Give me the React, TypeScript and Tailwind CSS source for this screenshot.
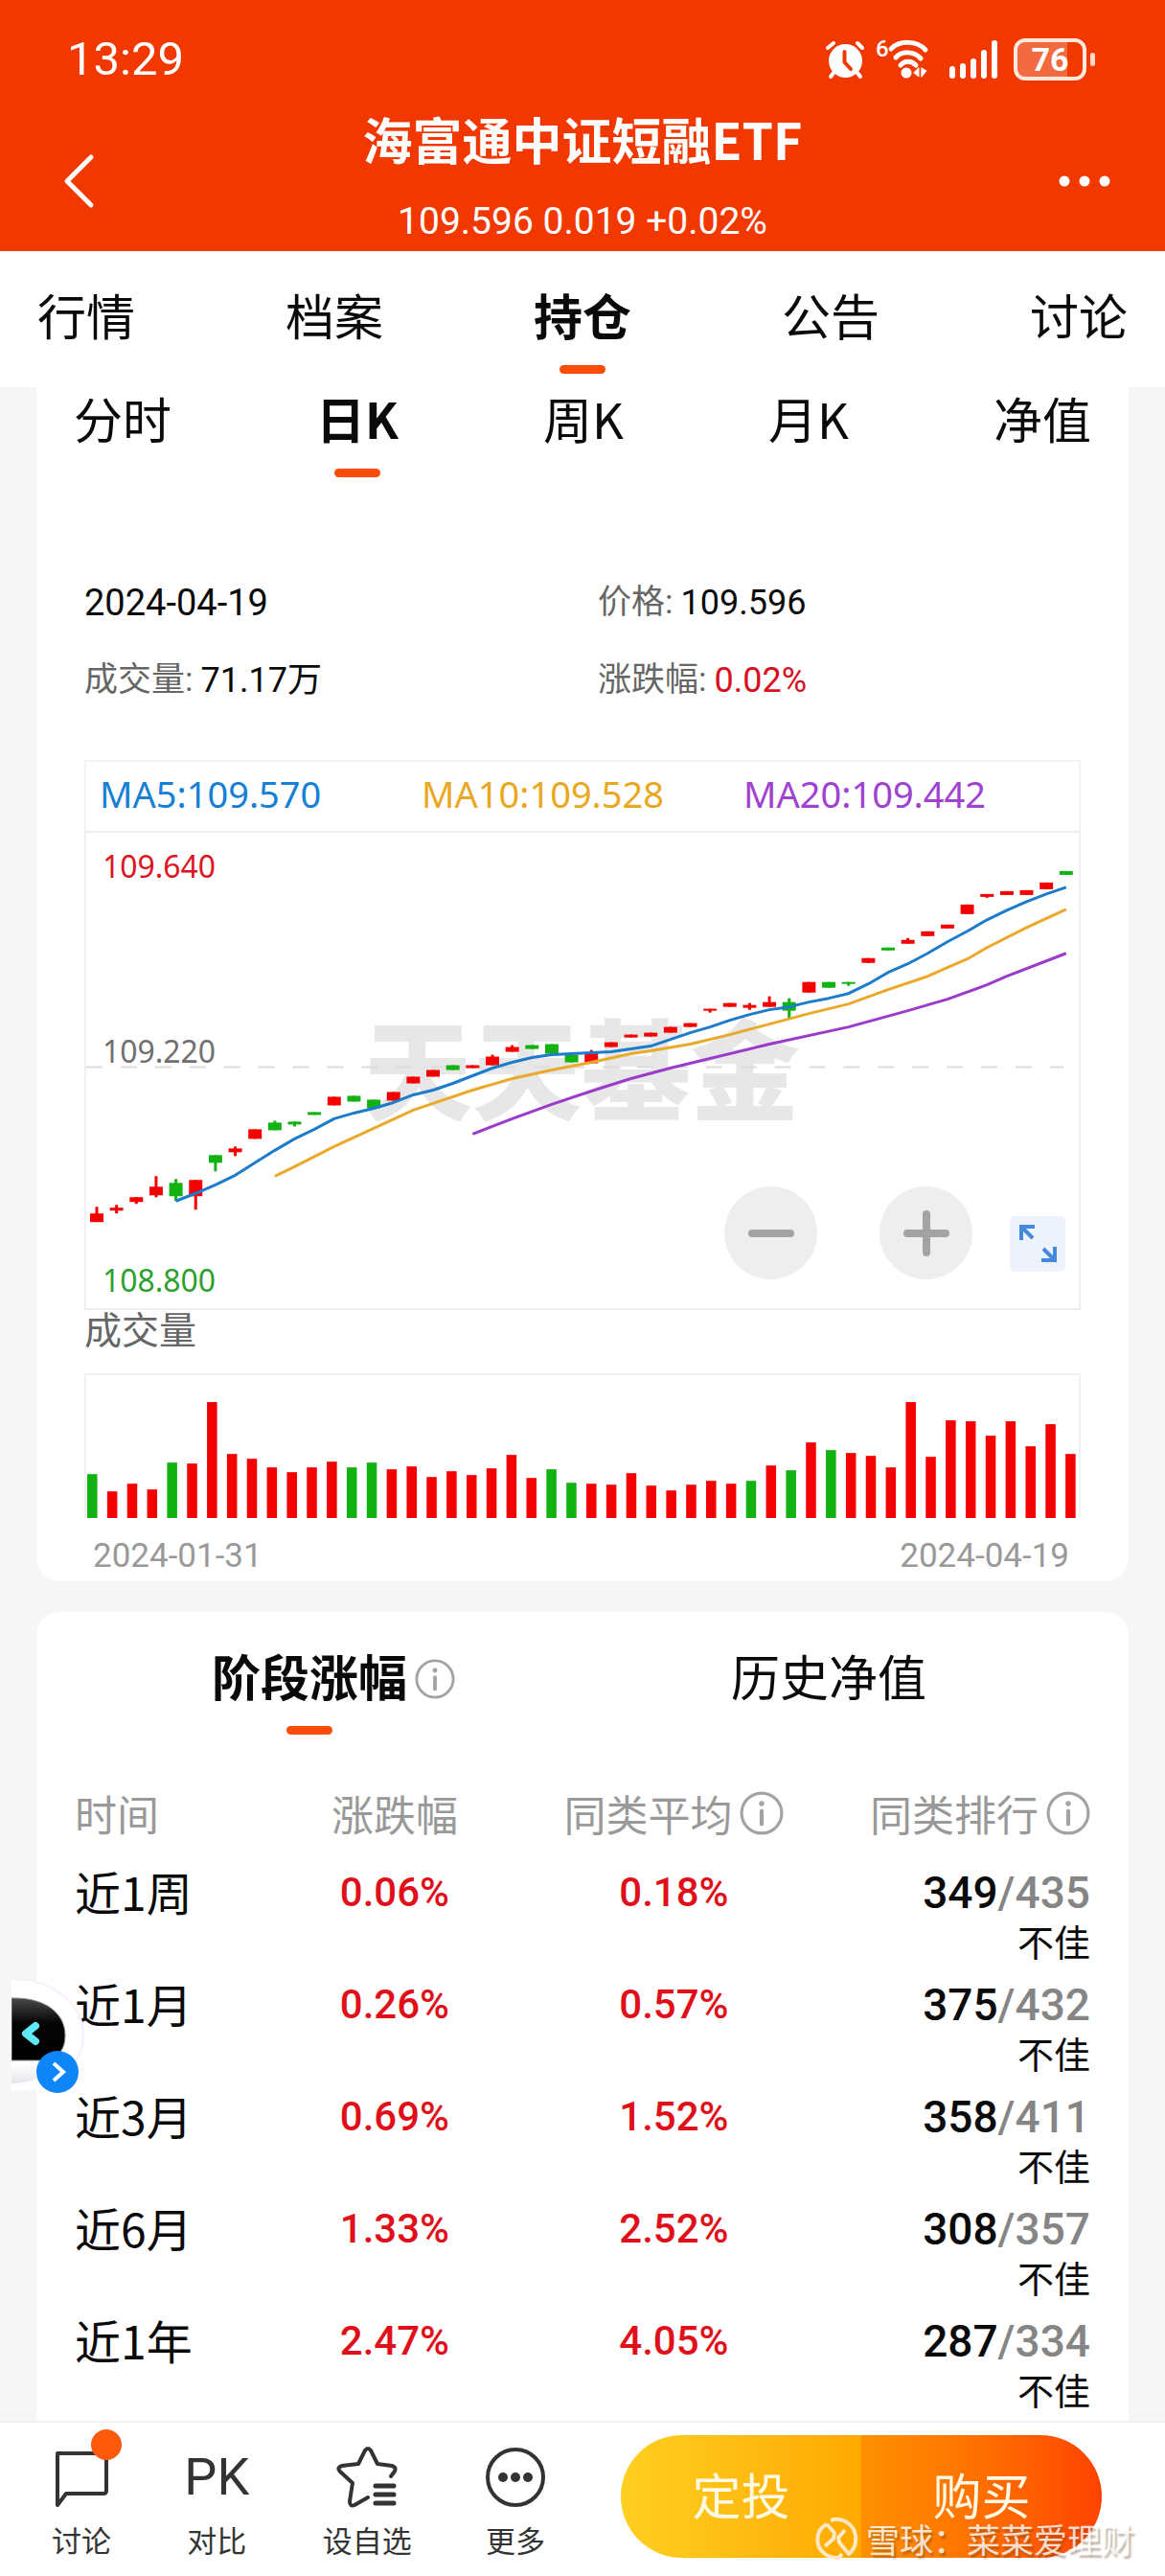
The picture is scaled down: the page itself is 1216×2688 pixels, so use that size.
import React from "react";

const RED = "#f40000";
const GREEN = "#12b212";

/* [up, bodyTop, bodyBottom, wickTop, wickBottom] */
const candles: [number, number, number, number, number][] = [
  [1, 398, 407, 391, 407], [1, 392, 395, 389, 398], [1, 381, 386, 381, 388], [1, 370, 379, 359, 381],
  [0, 366, 380, 362, 385], [1, 363, 380, 363, 394], [0, 337, 345, 337, 354], [1, 330, 334, 328, 338],
  [1, 310, 320, 310, 320], [0, 303, 311, 301, 311], [0, 302, 305, 302, 307], [0, 292, 295, 292, 295],
  [1, 276, 285, 276, 285], [0, 275, 281, 275, 281], [0, 279, 288, 279, 288], [1, 271, 280, 271, 280],
  [1, 255, 262, 255, 262], [1, 248, 255, 248, 255], [0, 243, 248, 243, 248], [1, 243, 246, 243, 246],
  [1, 234, 243, 232, 243], [1, 224, 229, 222, 229], [0, 222, 226, 222, 226], [0, 221, 231, 221, 231],
  [0, 232, 240, 232, 240], [1, 230, 241, 227, 241], [1, 219, 224, 219, 224], [1, 211, 214, 211, 214],
  [1, 209, 213, 209, 213], [1, 203, 209, 203, 209], [1, 199, 203, 199, 203], [1, 184, 186, 184, 188],
  [1, 178, 182, 178, 182], [1, 180, 183, 178, 185], [1, 177, 182, 171, 182], [0, 177, 186, 173, 194],
  [1, 156, 167, 156, 167], [0, 156, 162, 156, 162], [0, 156, 158, 156, 160], [1, 131, 136, 131, 136],
  [0, 120, 123, 120, 123], [1, 112, 116, 110, 116], [1, 103, 108, 103, 108], [1, 96, 100, 96, 100],
  [1, 75, 85, 75, 85], [1, 64, 67, 64, 68], [1, 61, 65, 61, 65], [1, 60, 65, 60, 65],
  [1, 52, 59, 52, 59], [0, 40, 44, 40, 44],
];

const candleX = (i: number) => 11 + i * 20.69;

const ma5 = [385, 377, 368, 358, 345, 332, 320, 310, 299, 293, 288, 282, 274, 269, 262, 254, 246, 240, 235, 232, 231, 230, 229, 226, 223, 216, 209, 203, 196, 190, 185, 182, 177, 173, 168, 158, 146, 137, 126, 114, 103, 91, 81, 72, 64, 57]
  .map((y, i) => `${candleX(i + 4)},${y}`).join(" ");

const toPoints = (pts: number[][]) => pts.map(([i, y]) => `${candleX(i)},${y}`).join(" ");
const ma10 = toPoints([[9, 359], [10, 349], [12, 328], [14, 309], [16, 290], [17, 283], [19, 269], [21, 257], [23, 248], [25, 240], [27, 231], [28, 228], [30, 221], [32, 211], [34, 200], [36, 189], [38, 179], [40, 164], [42, 150], [43, 141], [44, 132], [45, 120], [47, 99], [49, 80]]);
const ma20 = toPoints([[19, 315], [21, 299], [23, 284], [25, 270], [27, 257], [29, 246], [31, 236], [34, 221], [38, 203], [41, 186], [43, 174], [45, 159], [46, 150], [49, 126]]);

const volumes = [46, 28, 36, 30, 58, 57, 121, 67, 62, 53, 48, 53, 59, 53, 58, 51, 54, 43, 49, 45, 52, 66, 42, 51, 37, 36, 35, 47, 34, 29, 35, 39, 36, 39, 55, 50, 79, 71, 68, 65, 53, 121, 64, 102, 101, 86, 101, 75, 98, 67];
const greenVolumes = [0, 4, 13, 14, 23, 24, 33, 35, 37];

const rows = [
  ["近1周", "0.06%", "0.18%", "349", "435"],
  ["近1月", "0.26%", "0.57%", "375", "432"],
  ["近3月", "0.69%", "1.52%", "358", "411"],
  ["近6月", "1.33%", "2.52%", "308", "357"],
  ["近1年", "2.47%", "4.05%", "287", "334"],
];

const num = "font-['Roboto','Noto_Sans_CJK_SC',sans-serif]";

function StatusIcons() {
  return (
    <div className="flex items-center" aria-label="状态">
      <svg width="40" height="42" viewBox="0 0 40 42" fill="none" strokeLinecap="round">
        <circle cx="20.500" cy="22.500" r="17.500" fill="#fff" />
        <path d="M2 9 L8 4 M33 4 L38 9" stroke="#fff" strokeWidth="4" />
        <path d="M8 35 L5 39 M33 35 L36 39" stroke="#fff" strokeWidth="4" />
        <path d="M19.500 13 V24 L26 31" stroke="#ef3900" strokeWidth="4" strokeLinejoin="round" />
      </svg>
      <div className="ml-3 flex">
        <span className={num + " w-3 text-2xl leading-5 font-medium"}>6</span>
        <svg width="44" height="42" viewBox="0 0 44 42" fill="none" stroke="#fff" strokeWidth="5" strokeLinecap="round">
          <path d="M4 10 C13 1 31 1 40 11" />
          <path d="M9 19 C15 12 28 12 35 20" />
          <path d="M14 27 C18 22 25 22 30 27" />
          <circle cx="20" cy="35" r="5.500" fill="#fff" stroke="none" />
          <path d="M33 30 V39 L28 35 Z M36 30 L41 33 L36 39 Z" fill="#fff" strokeWidth="1" />
        </svg>
      </div>
      <svg className="ml-5" width="52" height="42" viewBox="0 0 52 42" stroke="#fff" strokeWidth="6" strokeLinecap="round">
        <path d="M4 31 V38 M15 28 V38 M26 23 V38 M37 14 V38 M48 4 V38" />
      </svg>
      <div className="ml-4 flex items-center gap-1">
        <div className={num + " flex h-11 w-[76px] items-center justify-center rounded-xl border-4 border-[#ffe9dd] bg-linear-to-r from-[#f26a3f] from-76% to-[#ef3900] to-76% text-[34px] leading-9 font-bold"}>
          76
        </div>
        <div className="h-3.5 w-[5px] rounded-full bg-[#ffd9c8]" />
      </div>
    </div>
  );
}

function InfoIcon({ size }: { size: number }) {
  return (
    <svg width={size} height={size} viewBox="0 0 44 44" fill="none" stroke="#a3a3a3" strokeLinecap="round">
      <circle cx="22" cy="22" r="20" strokeWidth="3" />
      <path d="M22 20 V33" strokeWidth="4" />
      <circle cx="22" cy="12.500" r="2.600" fill="#a3a3a3" stroke="none" />
    </svg>
  );
}

function Tabs({ items, active }: { items: string[]; active: number }) {
  return (
    <nav className="flex justify-between px-[39px]">
      {items.map((label, i) => (
        <button key={label} className={"flex flex-col items-center text-[51px] leading-[54px] text-[#0a0a0a] " + (i === active ? "font-bold" : "")}>
          {label}
          {i === active && <span className="mt-[26px] h-[9px] w-12 rounded-full bg-[#fb4d06]" />}
        </button>
      ))}
    </nav>
  );
}

function PriceChart() {
  return (
    <div className="relative border-2 border-[#efefef]">
      <svg className="block h-auto w-full" viewBox="0 0 1038 497" role="img" aria-label="日K线">
        <text x="290" y="292" fontSize="114" fontWeight="900" fill="#e7e7e7" fontFamily="Noto Sans CJK SC, sans-serif">天天基金</text>
        <path d="M0 245 H1022" stroke="#dcdcdc" strokeWidth="2" strokeDasharray="17 19" />
        <g fontSize="32" fontFamily="Noto Sans, sans-serif">
          <text x="17" y="47" fill="#dc1423">109.640</text>
          <text x="17" y="240" fill="#707070">109.220</text>
          <text x="17" y="480" fill="#2ca02f">108.800</text>
        </g>
        {candles.map(([up, top, bottom, high, low], i) => (
          <g key={i} fill={up ? RED : GREEN}>
            <rect x={candleX(i) - 7} y={top} width="14" height={bottom - top} />
            <rect x={candleX(i) - 1.5} y={high} width="3" height={low - high} />
          </g>
        ))}
        <g fill="none" strokeWidth="3" strokeLinejoin="round">
          <polyline points={ma20} stroke="#9a3bcb" />
          <polyline points={ma10} stroke="#eaa92a" />
          <polyline points={ma5} stroke="#1c7ccb" />
        </g>
      </svg>
      <div className="absolute right-3.5 bottom-[30px] flex items-end">
        <button aria-label="缩小" className="mr-[65px] flex size-[97px] items-center justify-center rounded-full bg-[#eee]">
          <svg width="52" height="52" viewBox="0 0 52 52" stroke="#a3a3a3" strokeWidth="8" strokeLinecap="round"><path d="M6 26 H46" /></svg>
        </button>
        <button aria-label="放大" className="mr-[39px] flex size-[97px] items-center justify-center rounded-full bg-[#eee]">
          <svg width="52" height="52" viewBox="0 0 52 52" stroke="#a3a3a3" strokeWidth="8" strokeLinecap="round"><path d="M6 26 H46 M26 6 V46" /></svg>
        </button>
        <button aria-label="全屏" className="mb-2 rounded-md bg-[#eef2fd]">
          <svg width="58" height="58" viewBox="0 0 58 58" fill="none" stroke="#4489dc" strokeWidth="4">
            <path d="M26 11 H12 V25 M12 11 L24 23" />
            <path d="M33 46 H47 V32 M47 46 L35 34" />
          </svg>
        </button>
      </div>
    </div>
  );
}

function VolumeChart() {
  return (
    <svg className="block h-auto w-full" viewBox="0 0 1038 151" role="img" aria-label="成交量">
      <path d="M1 151 V1 H1037 V151" fill="none" stroke="#f1f1f1" strokeWidth="2" />
      {volumes.map((v, i) => (
        <rect key={i} x={3 + i * 20.8} y={151 - v} width="10.500" height={v} fill={greenVolumes.includes(i) ? GREEN : RED} />
      ))}
    </svg>
  );
}

function Assistant() {
  return (
    <button aria-label="助手" className="absolute top-[380px] -left-[26px]">
      <svg width="80" height="140" viewBox="0 0 80 140" fill="none">
        <defs>
          <linearGradient id="visor" x1="0" y1="0" x2="0" y2="1">
            <stop offset="0" stopColor="#4a4a4a" />
            <stop offset="0.400" stopColor="#050505" />
            <stop offset="1" stopColor="#000" />
          </linearGradient>
          <linearGradient id="base" x1="0" y1="0" x2="0" y2="1">
            <stop offset="0" stopColor="#fff" />
            <stop offset="1" stopColor="#e4e4ea" />
          </linearGradient>
        </defs>
        <path d="M0 3 C42 3 75 28 75 62 C75 94 45 120 0 120 Z" fill="#fff" />
        <path d="M0 3 C42 3 75 28 75 62 C75 76 70 87 62 96" stroke="#f8effa" strokeWidth="2" />
        <path d="M0 92 H40 C34 106 18 112 0 112 Z" fill="url(#base)" />
        <path d="M0 23 C34 22 56 38 56 62 C56 76 50 84 36 88 H0 Z" fill="url(#visor)" stroke="#8d8d8d" strokeWidth="1" />
        <path d="M25 52 L15 60 L25 68" stroke="#5fe8f5" strokeWidth="8" strokeLinecap="round" strokeLinejoin="round" />
        <circle cx="48" cy="100" r="22" fill="#0f86f8" />
        <path d="M44 91 L54 100 L44 109" stroke="#fff" strokeWidth="4" />
      </svg>
    </button>
  );
}

function BarItem({ label, children }: { label: string; children: React.ReactNode }) {
  return (
    <button className="flex flex-col items-center text-[31px] leading-10 text-[#333]">
      <span className="flex h-[66px] items-center">{children}</span>
      <span className="mt-3">{label}</span>
    </button>
  );
}

function BottomBar() {
  const line = { fill: "none", stroke: "#333", strokeWidth: 4, strokeLinecap: "round" as const, strokeLinejoin: "round" as const };
  return (
    <footer className="relative flex h-[162px] shrink-0 items-start justify-between border-t-2 border-[#f1f1f1] bg-white pr-[66px] pl-[54px]">
      <div className="flex flex-1 justify-between pt-6 pr-[78px]">
        <BarItem label="讨论">
          <span className="relative">
            <svg width="60" height="62" viewBox="0 0 60 62" {...line}>
              <path d="M5 6 H54 Q56 6 56 8 V45 Q56 48 53 48 H14 L5 60 V8 Q5 6 7 6 Z" />
            </svg>
            <i className="absolute -top-[19px] -right-3 size-8 rounded-full bg-[#ff5a0c]" />
          </span>
        </BarItem>
        <BarItem label="对比">
          <span className={num + " text-[54px]"}>PK</span>
        </BarItem>
        <BarItem label="设自选">
          <svg width="64" height="64" viewBox="0 0 64 64" {...line}>
            <path d="M33 53 L19 61 Q14 63 14 57 L17 38 L4 26 Q0 22 6 20 L23 18 L30 4 Q33 0 36 4 L43 18 L58 20 Q64 22 60 27 L57 31" />
            <path d="M41 41 H60 M41 50 H60 M41 59 H60" strokeWidth="5" />
          </svg>
        </BarItem>
        <BarItem label="更多">
          <svg width="64" height="64" viewBox="0 0 64 64" {...line}>
            <circle cx="32" cy="32" r="29" />
            <g fill="#333" stroke="none"><circle cx="19" cy="32" r="5" /><circle cx="32" cy="32" r="5" /><circle cx="45" cy="32" r="5" /></g>
          </svg>
        </BarItem>
      </div>
      <div className="mt-[13px] flex h-32 overflow-hidden rounded-full text-[51px] text-[#fffae6]">
        <button className="w-[251px] bg-linear-to-r from-[#ffcf20] to-[#ffa900] pb-1.5">定投</button>
        <button className="w-[251px] bg-linear-to-r from-[#ff9100] to-[#ff4200] pb-1.5">购买</button>
      </div>
      <div className="absolute right-8 bottom-4 flex items-center gap-2 text-[35px] leading-[46px] text-white/80 [text-shadow:2px_3px_2px_rgba(90,60,30,0.4)]">
        <svg width="46" height="46" viewBox="0 0 46 46" fill="none" stroke="#ffe9c4" strokeWidth="4">
          <path d="M13 8 C1 14 0 31 11 39 C15 42 20 43 25 43 L29 39" />
          <path d="M17 4 C28 0 41 7 43 20 C44 28 41 35 36 39 L26 27 L25 22 L32 14" strokeLinejoin="round" />
          <path d="M13 8 L21 17 L20 23 L11 31" strokeLinejoin="round" />
        </svg>
        <span>雪球：菜菜爱理财</span>
      </div>
    </footer>
  );
}

export default function App() {
  return (
    <div className="flex min-h-screen flex-col bg-[#f6f6f6] font-['Noto_Sans_CJK_SC',sans-serif] text-[#0a0a0a]">
      <header className="bg-[#f03800] pb-[7px] text-white">
        <div className="flex h-[115px] items-center justify-between pt-2 pr-[73px] pl-[70px]">
          <time className={num + " text-[49px] leading-none"}>13:29</time>
          <StatusIcons />
        </div>
        <div className="flex items-center justify-between px-14">
          <button aria-label="返回" className="mt-2 w-14">
            <svg width="56" height="60" viewBox="0 0 56 60" fill="none" stroke="#fff" strokeWidth="5" strokeLinecap="round" strokeLinejoin="round"><path d="M39 5 L14 30 L39 55" /></svg>
          </button>
          <div className="flex flex-col items-center gap-8">
            <h1 className="text-[52px] leading-[60px] font-bold">海富通中证短融ETF</h1>
            <p className={num + " text-[39px] leading-[48px]"}>109.596 0.019 +0.02%</p>
          </div>
          <button aria-label="更多" className="mt-2 w-14">
            <svg width="56" height="20" viewBox="0 0 56 20" fill="#fff"><circle cx="7" cy="10" r="5.500" /><circle cx="28" cy="10" r="5.500" /><circle cx="49" cy="10" r="5.500" /></svg>
          </button>
        </div>
      </header>

      <div className="h-[142px] bg-white pt-[39px]">
        <Tabs items={["行情", "档案", "持仓", "公告", "讨论"]} active={2} />
      </div>

      <section className="mx-[38px] rounded-b-3xl bg-white pt-[5px] pb-1.5">
        <Tabs items={["分时", "日K", "周K", "月K", "净值"]} active={1} />
        <div className="px-[50px]">
          <dl className={num + " mt-[107px] grid grid-cols-[535fr_503fr] gap-y-[33px] text-[36px] leading-[48px]"}>
            <div className="text-[38px]">2024-04-19</div>
            <div className="flex gap-2"><dt className="text-[35px] text-[#666]">价格:</dt><dd>109.596</dd></div>
            <div className="flex gap-2"><dt className="text-[35px] text-[#666]">成交量:</dt><dd>71.17万</dd></div>
            <div className="flex gap-2"><dt className="text-[35px] text-[#666]">涨跌幅:</dt><dd className="text-[#d8101c]">0.02%</dd></div>
          </dl>
          <div className="mt-[59px] grid h-[74px] grid-cols-3 items-center border-2 border-b-0 border-[#f3f3f3] px-3.5 pb-1.5 font-['Noto_Sans',sans-serif] text-[38px]">
            <span className="text-[#1580d4]">MA5:109.570</span>
            <span className="text-[#eaa722]">MA10:109.528</span>
            <span className="text-[#9f42cf]">MA20:109.442</span>
          </div>
          <PriceChart />
          <h2 className="mb-[30px] text-[39px] leading-[36px] text-[#666]">成交量</h2>
          <VolumeChart />
          <div className={num + " mt-5 flex justify-between pr-3 pl-[9px] text-[35px] leading-10 text-[#999]"}>
            <time>2024-01-31</time>
            <time>2024-04-19</time>
          </div>
        </div>
      </section>

      <section className="relative mx-[38px] mt-8 flex-1 rounded-t-3xl bg-white">
        <div className="flex justify-between pt-[39px] pr-[211px] pl-[183px]">
          <div className="flex gap-2">
            <button className="flex flex-col items-center text-[51px] leading-[54px] font-bold">
              阶段涨幅
              <span className="mt-[26px] h-[9px] w-12 rounded-full bg-[#fb4d06]" />
            </button>
            <span className="pt-2.5"><InfoIcon size={42} /></span>
          </div>
          <button className="flex text-[51px] leading-[54px]">历史净值</button>
        </div>
        <div className="px-[40px] pt-[54px]">
          <table className="w-full table-fixed">
            <thead>
              <tr className="h-[85px] align-top text-[44px] leading-[56px] text-[#999]">
                <th className="w-[21%] text-left font-normal">时间</th>
                <th className="w-[21%] font-normal">涨跌幅</th>
                <th className="font-normal"><span className="flex items-center justify-center gap-2">同类平均<InfoIcon size={46} /></span></th>
                <th className="w-[24%] font-normal"><span className="flex items-center justify-end gap-2">同类排行<InfoIcon size={46} /></span></th>
              </tr>
            </thead>
            <tbody>
              {rows.map(([period, change, average, rank, total]) => (
                <tr key={period} className="h-[117px] align-top leading-[52px] last:h-[100px]">
                  <td className="text-[48px] leading-[48px]">{period}</td>
                  <td className={num + " text-center text-[42px] font-medium text-[#e0101a]"}>{change}</td>
                  <td className={num + " text-center text-[42px] font-medium text-[#e0101a]"}>{average}</td>
                  <td className="text-right">
                    <div className={num + " text-[46px] font-medium"}>{rank}<span className="text-[#858585]">/{total}</span></div>
                    <div className="text-[38px] leading-[48px]">不佳</div>
                  </td>
                </tr>
              ))}
            </tbody>
          </table>
        </div>
        <Assistant />
      </section>
      <BottomBar />
    </div>
  );
}
